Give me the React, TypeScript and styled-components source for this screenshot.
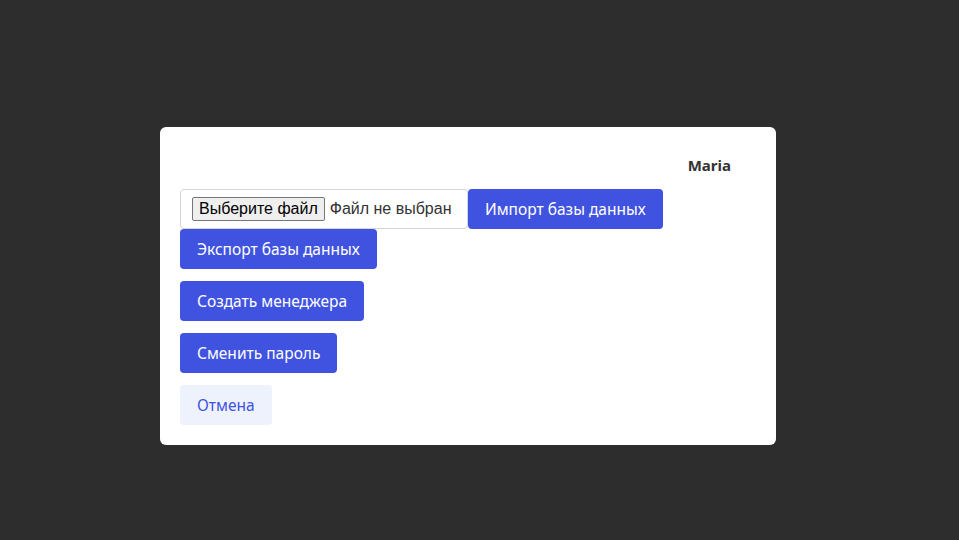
import React from "react";
import styled, { createGlobalStyle } from "styled-components";

const Global = createGlobalStyle`
  html, body { margin: 0; padding: 0; }
  body {
    background: #2d2d2d;
    font-family: "Noto Sans", "Open Sans", sans-serif;
    width: 959px;
    height: 540px;
    overflow: hidden;
  }
`;

const Page = styled.div`
  width: 959px;
  height: 540px;
  padding: 127px 0 0 160px;
  box-sizing: border-box;
`;

const Card = styled.div`
  width: 616px;
  background: #ffffff;
  border-radius: 6px;
  padding: 20px;
  box-sizing: border-box;
`;

const Header = styled.div`
  display: flex;
  justify-content: flex-end;
  align-items: center;
  height: 36px;
  padding-right: 25px;
  margin-bottom: 6px;
`;

const Name = styled.span`
  font-weight: 700;
  font-size: 15px;
  color: #333333;
`;

const Row = styled.div`
  display: flex;
  flex-wrap: wrap;
  width: 500px;
`;

const FileBox = styled.label`
  display: flex;
  align-items: center;
  gap: 5px;
  height: 40px;
  width: 288px;
  box-sizing: border-box;
  border: 1px solid #d6d6d6;
  border-radius: 4px;
  padding: 0 11px;
  cursor: pointer;
`;

const HiddenInput = styled.input`
  display: none;
`;

const FakeButton = styled.span`
  display: inline-flex;
  align-items: center;
  height: 24px;
  box-sizing: border-box;
  padding: 0 6px;
  border: 1px solid #767676;
  border-radius: 2px;
  background: #efefef;
  font-family: "Liberation Sans", Arial, sans-serif;
  font-size: 16px;
  color: #000;
`;

const FileText = styled.span`
  font-family: "Liberation Sans", Arial, sans-serif;
  font-size: 16px;
  color: #333;
`;

const Button = styled.button<{ $variant?: "primary" | "ghost" }>`
  height: 40px;
  padding: 0 17px;
  border: none;
  border-radius: 4px;
  font-family: "Noto Sans", sans-serif;
  font-size: 15.5px;
  cursor: pointer;
  background: ${(p) => (p.$variant === "ghost" ? "#eef2fd" : "#4053e0")};
  color: ${(p) => (p.$variant === "ghost" ? "#4053e0" : "#ffffff")};
`;

const Stack = styled.div`
  display: flex;
  flex-direction: column;
  align-items: flex-start;
  gap: 12px;
  margin-top: 12px;
`;

export default function App() {
  return (
    <>
      <Global />
      <Page>
        <Card>
          <Header>
            <Name>Maria</Name>
          </Header>
          <Row>
            <FileBox>
              <HiddenInput type="file" />
              <FakeButton>Выберите файл</FakeButton>
              <FileText>Файл не выбран</FileText>
            </FileBox>
            <Button>Импорт базы данных</Button>
            <Button>Экспорт базы данных</Button>
          </Row>
          <Stack>
            <Button>Создать менеджера</Button>
            <Button>Сменить пароль</Button>
            <Button $variant="ghost">Отмена</Button>
          </Stack>
        </Card>
      </Page>
    </>
  );
}
